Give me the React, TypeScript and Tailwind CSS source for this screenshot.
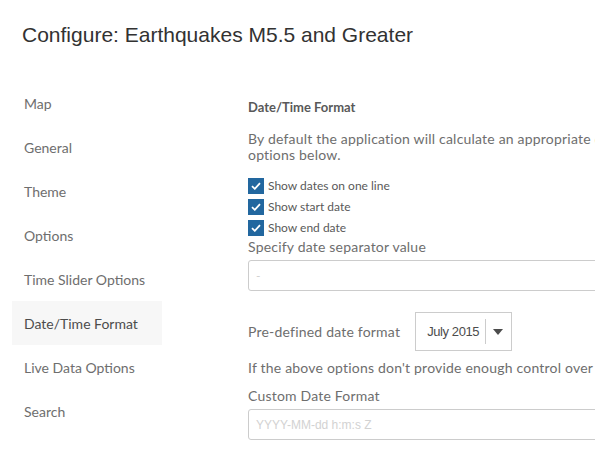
import React from 'react';

const navItems = [
  'Map',
  'General',
  'Theme',
  'Options',
  'Time Slider Options',
  'Date/Time Format',
  'Live Data Options',
  'Search',
];

function Check({ label }: { label: string }) {
  return (
    <label className="flex h-[21px] items-center gap-1">
      <span className="flex h-4 w-4 items-center justify-center bg-[#22679f]">
        <svg width="10" height="8" viewBox="0 0 10 8" fill="none">
          <path d="M1 4.2 L3.8 6.8 L9 1.2" stroke="white" strokeWidth="1.8" />
        </svg>
      </span>
      <span className="text-[12px] text-[#595959]">{label}</span>
    </label>
  );
}

export default function App() {
  const active = 'Date/Time Format';
  return (
    <div className="h-[456px] w-[595px] overflow-hidden bg-white font-['Lato',sans-serif] text-[#6e6e6e]">
      <h1 className="pl-[22px] pt-[20px] font-['Liberation_Sans',Arial,sans-serif] text-[21px] leading-[30px] text-[#323232]">
        Configure: Earthquakes M5.5 and Greater
      </h1>
      <div className="mt-[31px] flex">
        <nav className="flex w-[236px] shrink-0 flex-col pl-3">
          {navItems.map((item) => (
            <div
              key={item}
              className={
                item === active
                  ? 'flex h-[44px] w-[150px] items-center bg-[#f7f7f7] pl-3 text-[14px] text-[#4c4c4c]'
                  : 'flex h-[44px] w-[150px] items-center pl-3 text-[14px]'
              }
            >
              {item}
            </div>
          ))}
        </nav>
        <main className="min-w-0 flex-1 overflow-hidden pl-3 pt-[15px] tracking-[0.2px]">
          <div className="w-[560px]">
            <h2 className="flex h-[24px] items-center text-[13px] font-bold tracking-normal text-[#595959]">
              Date/Time Format
            </h2>
            <p className="mt-[11px] whitespace-nowrap text-[14px] leading-[16px]">
              By default the application will calculate an appropriate date format. To override use the
              <br />
              options below.
            </p>
            <div className="mt-[12px] flex flex-col tracking-normal">
              <Check label="Show dates on one line" />
              <Check label="Show start date" />
              <Check label="Show end date" />
            </div>
            <div className="text-[14px] leading-[18px]">Specify date separator value</div>
            <div className="mt-[4px] flex h-[31px] items-center rounded-[3px] border border-[#cccccc] px-[7px] text-[12px] text-[#cfcfcf]">
              -
            </div>
            <div className="mt-[21px] flex items-center gap-[15px]">
              <span className="text-[14px]">Pre-defined date format</span>
              <div className="flex h-[39px] w-[97px] items-center border border-[#cccccc] pl-[11px] tracking-normal">
                <span className="font-['Liberation_Sans',Arial,sans-serif] text-[13px] tracking-[-0.4px] text-[#4c4c4c]">
                  July 2015
                </span>
                <span className="ml-[6px] h-[25px] w-px bg-[#cccccc]" />
                <svg className="ml-[7px]" width="10" height="6" viewBox="0 0 10 6">
                  <path d="M0 0 H10 L5 6 Z" fill="#4c4c4c" />
                </svg>
              </div>
            </div>
            <div className="mt-[8px] whitespace-nowrap text-[14px] leading-[18px]">
              If the above options don&apos;t provide enough control over the date format, specify a custom format
            </div>
            <div className="mt-[10px] text-[14px] leading-[18px]">Custom Date Format</div>
            <div className="mt-[4px] flex h-[31px] items-center rounded-[3px] border border-[#cccccc] px-[7px] font-['Liberation_Sans',Arial,sans-serif] text-[12px] tracking-normal text-[#d2d2d2]">
              YYYY-MM-dd h:m:s Z
            </div>
          </div>
        </main>
      </div>
    </div>
  );
}
